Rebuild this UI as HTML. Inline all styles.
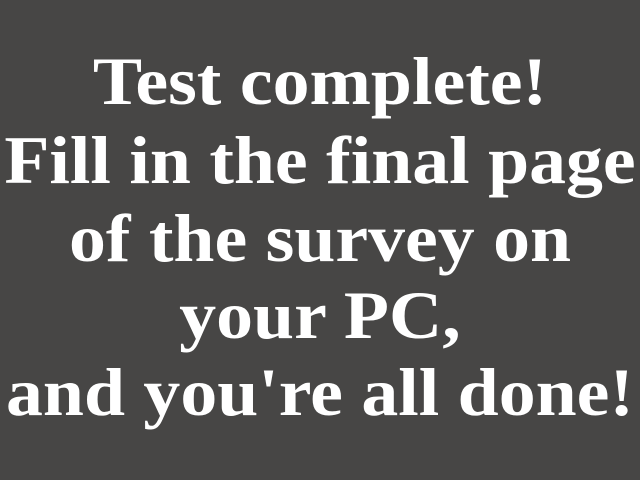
<!DOCTYPE html>
<html><head><meta charset="utf-8"><style>
html,body{margin:0;padding:0;width:640px;height:480px;background:#474645;overflow:hidden}
.l{position:absolute;left:0;width:640px;text-align:center;color:#fff;font-family:"Liberation Serif",serif;font-weight:bold;font-size:68px;line-height:68px;white-space:nowrap;transform:scaleX(1.085);transform-origin:320px 0}
</style></head><body>
<div class="l" style="top:47px">Test complete!</div>
<div class="l" style="top:126px">Fill in the final page</div>
<div class="l" style="top:204px">of the survey on</div>
<div class="l" style="top:281px">your PC,</div>
<div class="l" style="top:358px">and you're all done!</div>
</body></html>
